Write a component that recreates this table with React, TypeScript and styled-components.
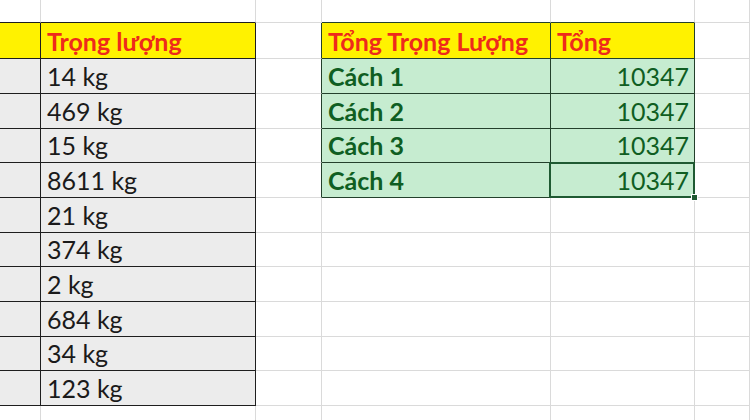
import styled, { createGlobalStyle, css } from "styled-components";

const GlobalStyle = createGlobalStyle`
  html, body {
    margin: 0;
    padding: 0;
    background: #ffffff;
    overflow: hidden;
  }
`;

const COLS = [41, 215, 66, 229, 144];
const ROWS = [23, 36, 35, 35, 34, 35, 35, 34, 35, 35, 34, 35, 35];

const GRID = "#dadada";
const DARK = "#1e1e1e";
const DARK_GREEN = "#23402b";

type Tone = "head" | "plain" | "good" | "goodBold";

interface CellSpec {
  text?: string;
  fill?: string;
  right?: string;
  bottom?: string;
  tone?: Tone;
  align?: "left" | "right";
  selected?: boolean;
}

const weights = [
  "14 kg",
  "469 kg",
  "15 kg",
  "8611 kg",
  "21 kg",
  "374 kg",
  "2 kg",
  "684 kg",
  "34 kg",
  "123 kg",
];

function cellAt(row: number, col: number): CellSpec {
  const spec: CellSpec = { right: GRID, bottom: GRID };

  // left table: columns A-B, rows 1-11
  const inLeft = col <= 1 && row >= 1 && row <= 11;
  // summary table: columns D-E, rows 1-5
  const inSum = (col === 3 || col === 4) && row >= 1 && row <= 5;

  if (row === 0 && (col <= 1 || col === 3 || col === 4)) {
    spec.bottom = col <= 1 ? DARK : DARK_GREEN;
  }
  if (col === 2 && row >= 1 && row <= 5) spec.right = DARK_GREEN;

  if (inLeft) {
    spec.right = DARK;
    spec.bottom = DARK;
    if (row === 1) {
      spec.fill = "#fff200";
      if (col === 1) {
        spec.text = "Trọng lượng";
        spec.tone = "head";
      }
    } else {
      spec.fill = "#ececec";
      if (col === 1) {
        spec.text = weights[row - 2];
        spec.tone = "plain";
      }
    }
  }

  if (inSum) {
    spec.right = DARK_GREEN;
    spec.bottom = DARK_GREEN;
    if (row === 1) {
      spec.fill = "#fff200";
      spec.tone = "head";
      spec.text = col === 3 ? "Tổng Trọng Lượng" : "Tổng";
    } else {
      spec.fill = "#c6ecd0";
      if (col === 3) {
        spec.text = `Cách ${row - 1}`;
        spec.tone = "goodBold";
      } else {
        spec.text = "10347";
        spec.tone = "good";
        spec.align = "right";
      }
      if (row === 5 && col === 4) spec.selected = true;
    }
  }

  return spec;
}

const toneStyles: Record<Tone, ReturnType<typeof css>> = {
  head: css`
    color: #ee2a1c;
    font-weight: 700;
  `,
  plain: css`
    color: #1a1a1a;
    font-weight: 400;
  `,
  good: css`
    color: #0f5e22;
    font-weight: 400;
  `,
  goodBold: css`
    color: #0f5e22;
    font-weight: 700;
  `,
};

export default function App() {
  const cells = [];
  for (let r = 0; r < ROWS.length; r++) {
    for (let c = 0; c < COLS.length + 1; c++) {
      const spec = cellAt(r, c);
      cells.push(
        <Cell
          key={`${r}-${c}`}
          $fill={spec.fill}
          $right={spec.right}
          $bottom={spec.bottom}
          $tone={spec.tone}
          $align={spec.align}
          $selected={spec.selected}
        >
          {spec.text}
        </Cell>
      );
    }
  }

  return (
    <>
      <GlobalStyle />
      <Sheet>{cells}</Sheet>
    </>
  );
}

const Sheet = styled.div`
  display: grid;
  grid-template-columns: ${COLS.map((w) => `${w}px`).join(" ")} 1fr;
  grid-template-rows: ${ROWS.map((h) => `${h}px`).join(" ")};
  width: 750px;
  height: 420px;
  overflow: hidden;
  font-family: Lato, "Liberation Sans", sans-serif;
  font-size: 25px;
`;

const Cell = styled.div<{
  $fill?: string;
  $right?: string;
  $bottom?: string;
  $tone?: Tone;
  $align?: "left" | "right";
  $selected?: boolean;
}>`
  position: relative;
  box-sizing: border-box;
  display: flex;
  align-items: flex-end;
  justify-content: ${({ $align }) => ($align === "right" ? "flex-end" : "flex-start")};
  padding: 0 5px 2px 6px;
  background: ${({ $fill }) => $fill ?? "#ffffff"};
  border-right: 1px solid ${({ $right }) => $right ?? GRID};
  border-bottom: 1px solid ${({ $bottom }) => $bottom ?? GRID};
  line-height: 1.15;
  white-space: nowrap;
  ${({ $tone }) => ($tone ? toneStyles[$tone] : "")}

  ${({ $selected }) =>
    $selected &&
    css`
      &::after {
        content: "";
        position: absolute;
        left: -2px;
        top: -1px;
        right: -1px;
        bottom: -1px;
        border: 2px solid #1f5a32;
        pointer-events: none;
      }
      &::before {
        content: "";
        position: absolute;
        right: -4px;
        bottom: -4px;
        width: 5px;
        height: 5px;
        background: #1f5a32;
        border: 1px solid #ffffff;
        z-index: 1;
      }
    `}
`;
